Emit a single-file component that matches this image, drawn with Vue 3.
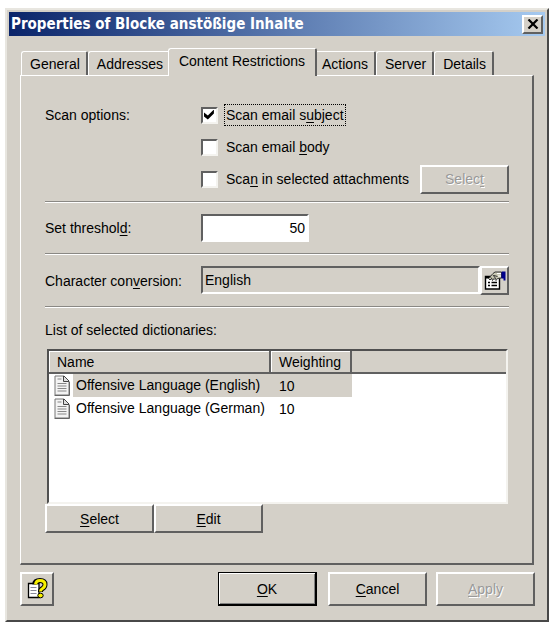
<script setup>
import { ref } from 'vue'

const tabs = [
  { id: 'general', label: 'General' },
  { id: 'addresses', label: 'Addresses' },
  { id: 'content', label: 'Content Restrictions' },
  { id: 'actions', label: 'Actions' },
  { id: 'server', label: 'Server' },
  { id: 'details', label: 'Details' },
]
const activeTab = ref('content')
const scanSubject = ref(true)
const scanBody = ref(false)
const scanAttachments = ref(false)
const threshold = ref('50')
const conversion = ref('English')
const selected = ref(0)
const dictionaries = [
  { name: 'Offensive Language (English)', weighting: 10 },
  { name: 'Offensive Language (German)', weighting: 10 },
]
</script>

<template>
  <main class="dialog">
    <header class="titlebar">
      <h1>Properties of Blocke anstößige Inhalte</h1>
      <button class="close" type="button" aria-label="Close">
        <svg width="12" height="10" viewBox="0 0 12 10"><path d="M1.5 0.5L10.5 9.5M10.5 0.5L1.5 9.5" stroke="#000" stroke-width="2.2" /></svg>
      </button>
    </header>

    <div class="body">
      <div class="tabs" role="tablist">
        <button
          v-for="tab in tabs"
          :key="tab.id"
          type="button"
          role="tab"
          class="tab"
          :class="{ active: tab.id === activeTab }"
          :aria-selected="tab.id === activeTab"
          @click="activeTab = tab.id"
        >{{ tab.label }}</button>
      </div>

      <section class="panel" role="tabpanel">
        <div class="row scan">
          <span class="caption">Scan options:</span>
          <div class="options">
            <div class="option">
              <input id="subject" v-model="scanSubject" type="checkbox" />
              <label for="subject" class="focused">Scan email s<u>u</u>bject</label>
            </div>
            <div class="option">
              <input id="bodytext" v-model="scanBody" type="checkbox" />
              <label for="bodytext">Scan email <u>b</u>ody</label>
            </div>
            <div class="option">
              <input id="attachments" v-model="scanAttachments" type="checkbox" />
              <label for="attachments">Sca<u>n</u> in selected attachments</label>
              <button class="btn attach" type="button" disabled>Selec<u>t</u></button>
            </div>
          </div>
        </div>

        <div class="row ruled">
          <label for="threshold">Set threshol<u>d</u>:</label>
          <input id="threshold" v-model="threshold" class="field number" type="text" />
        </div>

        <div class="row ruled">
          <label for="conversion">Character con<u>v</u>ersion:</label>
          <div class="picker">
            <input id="conversion" v-model="conversion" class="field" type="text" readonly />
            <button class="btn pick" type="button" aria-label="Choose conversion">
              <svg width="22" height="19" viewBox="0 0 22 19">
                <path d="M1.500 5.500h14v12.500h-14z" fill="#fff" stroke="#000" stroke-width="1.400" />
                <path d="M2 6.500h3.500" stroke="#000" stroke-width="2" />
                <path d="M4 11.500h2M7.500 11.500h5.500M4 14.500h2M7.500 14.500h5.500" stroke="#000" stroke-width="1.500" />
                <path d="M4.500 7.500L9 2.500L11 1h6.500v6L13.500 7.500L12 9.500L10 7.500L8.500 9.500L7.500 7.500L6 9z" fill="#c9c8b4" stroke="#333" />
                <path d="M10 4.500l3.500 1M6.500 6.500l2 1.500M9 4l3 4" fill="none" stroke="#333" />
                <path d="M13 2.500h4M14 5h3" stroke="#fff" />
                <path d="M18 0.500h3.500v9h-2v-2h-2v-6z" fill="#00008b" />
              </svg>
            </button>
          </div>
        </div>

        <div class="dictionaries">
          <h2 id="list-title">List of selected dictionaries:</h2>
          <div class="list">
            <table aria-labelledby="list-title">
              <colgroup><col class="col-name" /><col class="col-weight" /><col /></colgroup>
              <thead>
                <tr><th scope="col">Name</th><th scope="col">Weighting</th><td></td></tr>
              </thead>
              <tbody>
                <tr
                  v-for="(item, index) in dictionaries"
                  :key="item.name"
                  :class="{ selected: index === selected }"
                  @click="selected = index"
                >
                  <td>
                    <div class="entry">
                      <svg width="18" height="21" viewBox="0 0 18 21">
                        <path d="M2 1h9l5 5v14H2z" fill="#f4f4f4" stroke="#777" />
                        <path d="M10.500 1v5.500H16M11 1l5 5" fill="#ddd" stroke="#444" />
                        <path d="M4.500 4h4M4.500 8.500h9M4.500 11h9M4.500 13.500h9M4.500 16h9" stroke="#888" />
                        <path d="M1.500 20.500h15V7" fill="none" stroke="#666" />
                      </svg>
                      <span>{{ item.name }}</span>
                    </div>
                  </td>
                  <td>{{ item.weighting }}</td>
                  <td></td>
                </tr>
              </tbody>
            </table>
          </div>
          <div class="list-actions">
            <button class="btn" type="button"><u>S</u>elect</button>
            <button class="btn" type="button"><u>E</u>dit</button>
          </div>
        </div>
      </section>

      <footer class="footer">
        <button class="btn help" type="button" aria-label="Help">
          <svg width="21" height="23" viewBox="0 0 21 23">
            <path d="M1.500 5.500h10.500v14H1.500z" fill="#fff" stroke="#000" stroke-width="1.300" />
            <path d="M3.500 9.500h6M3.500 12.500h6M3.500 15.500h6" stroke="#889" />
            <path d="M7.500 6.500Q8 2.500 13 2.500Q18 2.500 18 6.500Q18 9 15.500 10.500Q13.500 11.500 13.500 14" fill="none" stroke="#000" stroke-width="5" />
            <path d="M8.500 6.500Q9 2.500 13 2.500Q18 2.500 18 6.500Q18 9 15.500 10.500Q13.500 11.500 13.500 13.500" fill="none" stroke="#f8f000" stroke-width="3" />
            <ellipse cx="13.500" cy="17.500" rx="2.700" ry="2.300" fill="#f8f000" stroke="#000" />
          </svg>
        </button>
        <div class="commands">
          <button class="btn default" type="button"><u>O</u>K</button>
          <button class="btn" type="button"><u>C</u>ancel</button>
          <button class="btn apply" type="button" disabled><u>A</u>pply</button>
        </div>
      </footer>
    </div>
  </main>
</template>

<style>
body {
  background: #fff;
}
</style>

<style scoped>
* {
  box-sizing: border-box;
}
.dialog {
  margin: 8px 2px 2px 5px;
  padding: 2px;
  background: #d4d0c8;
  border: 2px solid;
  border-color: #e8e6e0 #484848 #484848 #e8e6e0;
  font: 14px/16px "Liberation Sans", Arial, sans-serif;
  color: #000;
}
button,
input {
  font: inherit;
  color: inherit;
  margin: 0;
}
u {
  text-underline-offset: 2px;
}
.titlebar {
  display: flex;
  align-items: center;
  height: 24px;
  padding: 0 2px;
  background: linear-gradient(90deg, #0a246a, #a6caf0);
}
h1 {
  flex: 1;
  margin: 0;
  font: bold 15px/20px "DejaVu Sans Condensed", "DejaVu Sans", sans-serif;
  color: #fff;
}
.close {
  display: flex;
  align-items: center;
  justify-content: center;
  width: 21px;
  height: 19px;
  padding: 0;
  background: #d4d0c8;
  border: 2px solid;
  border-color: #fff #606060 #606060 #fff;
}
.body {
  padding: 12px 11px;
}
.tabs {
  display: flex;
  align-items: flex-end;
  height: 27px;
  padding-left: 1px;
}
.tab {
  height: 24px;
  padding: 0 6px 0 8px;
  background: #d4d0c8;
  border: solid;
  border-width: 1px 2px 0 1px;
  border-color: #fff #606060 #fff #fff;
  border-radius: 3px 2px 0 0;
  white-space: nowrap;
}
.tab.active {
  position: relative;
  height: 28px;
  margin: 0 -4px -1px -3px;
  padding: 0 10px 4px;
}
.panel {
  padding: 23px 23px 30px 24px;
  border: solid;
  border-width: 1px 2px 2px 1px;
  border-color: #fff #606060 #606060 #fff;
}
.row {
  display: grid;
  grid-template-columns: 156px 1fr;
  align-items: center;
}
.scan {
  align-items: start;
  padding-bottom: 6px;
}
.caption {
  line-height: 32px;
}
.option {
  display: flex;
  align-items: center;
  height: 32px;
}
.option label {
  padding: 2px 1px;
  margin-left: 6px;
  border: 1px solid transparent;
  white-space: nowrap;
}
.option .focused {
  border: 1px dotted #000;
}
input[type="checkbox"] {
  appearance: none;
  flex: none;
  width: 17px;
  height: 17px;
  background: #fff;
  border: 2px solid;
  border-color: #606060 #f4f3ef #f4f3ef #606060;
}
input[type="checkbox"]:checked::before {
  content: "";
  display: block;
  width: 11px;
  height: 10px;
  margin: 1px;
  background: #000;
  clip-path: polygon(0 30%, 35% 60%, 90% 0, 90% 40%, 35% 100%, 0 70%);
}
.ruled {
  padding: 12px 0 11px;
  border-top: 1px solid #8a8884;
  box-shadow: inset 0 1px #fff;
}
.field {
  min-width: 0;
  height: 28px;
  padding: 0 2px;
  background: transparent;
  border: 2px solid;
  border-color: #606060 #fff #fff #606060;
  outline: none;
}
.number {
  width: 108px;
  background: #fff;
  text-align: right;
}
.picker {
  display: flex;
}
.picker .field {
  flex: 1;
}
.btn {
  width: 109px;
  height: 29px;
  padding: 0;
  background: #d4d0c8;
  border: 2px solid;
  border-color: #fff #606060 #606060 #fff;
}
.btn:disabled {
  color: #999;
  text-shadow: 1px 1px #fff;
}
.attach {
  width: 89px;
  margin-left: auto;
}
.pick,
.help {
  display: flex;
  align-items: center;
  justify-content: center;
  width: 29px;
}
.dictionaries {
  padding-top: 15px;
  border-top: 1px solid #8a8884;
  box-shadow: inset 0 1px #fff;
}
h2 {
  margin: 0 0 11px;
  font: inherit;
}
.list {
  height: 155px;
  margin-right: 1px;
  margin-left: 2px;
  background: #fff;
  border: 2px solid;
  border-color: #505050 #f4f3ef #f4f3ef #505050;
}
table {
  width: 100%;
  table-layout: fixed;
  border-collapse: separate;
  border-spacing: 0;
}
.col-name {
  width: 222px;
}
.col-weight {
  width: 81px;
}
th,
td {
  height: 23px;
  padding: 0 8px;
  font-weight: normal;
  text-align: left;
  white-space: nowrap;
}
thead th,
thead td {
  background: #d4d0c8;
  border-bottom: 2px solid #606060;
}
thead th {
  border-right: 2px solid #606060;
  box-shadow: inset 1px 1px #fff;
}
tbody td:first-child {
  padding: 0 0 0 4px;
}
.entry {
  display: flex;
  align-items: center;
}
.entry svg {
  flex: none;
}
.entry span {
  flex: 1;
  margin-left: 2px;
  padding-left: 3px;
  line-height: 23px;
}
.selected .entry span,
.selected td:nth-child(2) {
  background: #d4d0c8;
}
.list-actions {
  display: flex;
}
.footer {
  display: flex;
  justify-content: space-between;
  align-items: center;
  margin-top: 7px;
}
.help {
  width: 34px;
  height: 34px;
}
.commands {
  display: flex;
  gap: 9px;
  margin-right: -1px;
}
.commands .btn {
  width: 99px;
  height: 34px;
}
.commands .default {
  margin-right: 2px;
  border-color: #000;
  border-width: 1px 2px 2px 1px;
  box-shadow: inset 1px 1px #fff, inset -1px -1px #808080;
}
</style>
